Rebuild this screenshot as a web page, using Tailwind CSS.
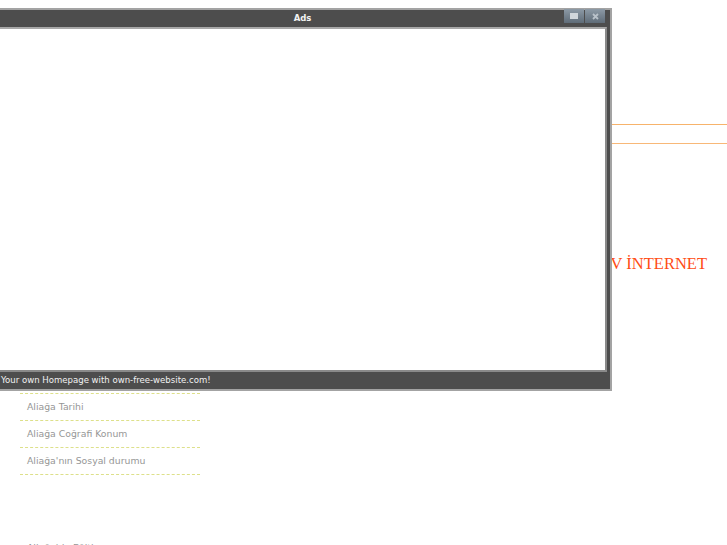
<!DOCTYPE html>
<html lang="en">

<head>
    <meta charset="UTF-8">
    <title>Ads</title>
    <script src="https://cdn.jsdelivr.net/npm/@tailwindcss/browser@4"></script>
</head>

<body class="relative h-[545px] w-[727px] overflow-hidden bg-white font-['DejaVu_Sans',sans-serif]">
    <!-- page behind the popup -->
    <div class="flex h-[545px] items-start pl-[20px]">
        <ul class="mt-[393px] w-[180px] shrink-0 border-t border-dashed border-[#dde08a] text-[9.3px] leading-[26px] text-[#969696]">
            <li class="border-b border-dashed border-[#dde08a] pl-[7px]">Aliağa Tarihi</li>
            <li class="border-b border-dashed border-[#dde08a] pl-[7px]">Aliağa Coğrafi Konum</li>
            <li class="border-b border-dashed border-[#dde08a] pl-[7px]">Aliağa'nın Sosyal durumu</li>
            <li class="mt-[60px] pl-[7px]">Aliağa'da Eğitim</li>
        </ul>
        <div class="flex-1">
            <div class="mt-[124px] h-px bg-[#f7b36b]"></div>
            <div class="mt-[18px] h-px bg-[#f8b878]"></div>
            <p class="mt-[111px] pr-[20px] text-right font-['Liberation_Serif',serif] text-[16.5px] leading-[18px] text-[#ff4d14]">TV İNTERNET</p>
        </div>
    </div>

    <!-- ad popup -->
    <div class="absolute left-[-7px] top-[8px] flex h-[383px] w-[619px] flex-col border-2 border-[#a3a3a3] bg-[#4d4d4d]">
        <div class="relative flex h-[17px] shrink-0 items-center justify-center text-[8.5px] font-bold text-[#f2f2f2]">
            Ads
            <div class="absolute right-[5px] top-[-1px] flex h-[14px] w-[41px] gap-px rounded-b-[2px]">
                <span class="flex flex-1 items-center justify-center bg-gradient-to-b from-[#8d9aa6] to-[#5f6c78]">
                    <span class="h-[6px] w-[8px] bg-[#d0d6db]"></span>
                </span>
                <span class="flex flex-1 items-center justify-center bg-gradient-to-b from-[#8d9aa6] to-[#5f6c78]">
                    <svg width="7" height="7" viewBox="0 0 7 7" fill="none" stroke="#b9c2ca" stroke-width="1.8"><path d="M1 1l5 5M6 1L1 6" /></svg>
                </span>
            </div>
        </div>
        <div class="ml-[3px] mr-[3px] h-[345px] shrink-0 border-2 border-[#8a8a8a] border-t-[#a8a8a8] bg-white"></div>
        <div class="flex flex-1 items-center pl-[6px] text-[8.55px] text-[#f2f2f2]">Your own Homepage with own-free-website.com!</div>
    </div>
</body>

</html>
